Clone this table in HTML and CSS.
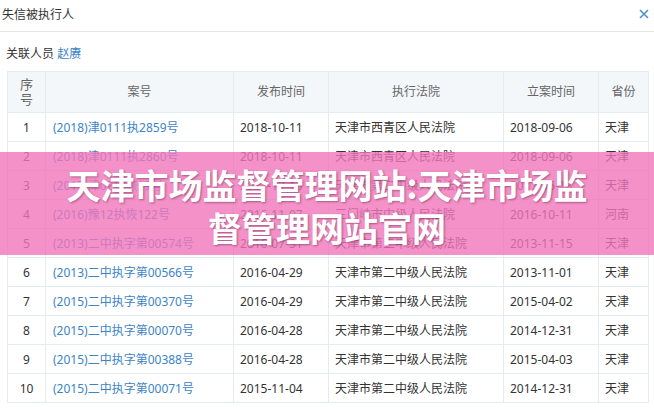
FILE: index.html
```html
<!DOCTYPE html>
<html lang="zh-CN">
<head>
<meta charset="utf-8">
<title>失信被执行人</title>
<link rel="stylesheet" href="styles.css">
</head>
<body>
<div class="dialog">
  <div class="dialog-head">
    <span class="dialog-title">失信被执行人</span>
    <span class="close" aria-label="关闭">
      <svg width="10" height="10" viewBox="0 0 10 10"><path d="M1 1L9 9M9 1L1 9" stroke="#4d90d0" stroke-width="1.6" fill="none"/></svg>
    </span>
  </div>
  <div class="related">关联人员 <a class="link">赵赓</a></div>
  <table class="grid">
    <colgroup>
      <col class="c-seq"><col class="c-case"><col class="c-date"><col class="c-court"><col class="c-date2"><col class="c-prov">
    </colgroup>
    <thead>
      <tr><th class="seq">序号</th><th>案号</th><th>发布时间</th><th>执行法院</th><th>立案时间</th><th>省份</th></tr>
    </thead>
    <tbody>
      <tr><td class="seq">1</td><td><a class="link">(2018)津0111执2859号</a></td><td>2018-10-11</td><td>天津市西青区人民法院</td><td>2018-09-06</td><td>天津</td></tr>
      <tr><td class="seq">2</td><td><a class="link">(2018)津0111执2860号</a></td><td>2018-10-11</td><td>天津市西青区人民法院</td><td>2018-09-06</td><td>天津</td></tr>
      <tr><td class="seq">3</td><td><a class="link">(2017)津02执恢19号</a></td><td>2017-12-13</td><td>天津市第二中级人民法院</td><td>2017-06-13</td><td>天津</td></tr>
      <tr><td class="seq">4</td><td><a class="link">(2016)豫12执恢122号</a></td><td>2016-11-07</td><td>三门峡市中级人民法院</td><td>2016-10-11</td><td>河南</td></tr>
      <tr><td class="seq">5</td><td><a class="link">(2013)二中执字第00574号</a></td><td>2016-07-31</td><td>天津市第二中级人民法院</td><td>2013-11-15</td><td>天津</td></tr>
      <tr><td class="seq">6</td><td><a class="link">(2013)二中执字第00566号</a></td><td>2016-04-29</td><td>天津市第二中级人民法院</td><td>2013-11-01</td><td>天津</td></tr>
      <tr><td class="seq">7</td><td><a class="link">(2015)二中执字第00370号</a></td><td>2016-04-29</td><td>天津市第二中级人民法院</td><td>2015-04-02</td><td>天津</td></tr>
      <tr><td class="seq">8</td><td><a class="link">(2015)二中执字第00070号</a></td><td>2016-04-28</td><td>天津市第二中级人民法院</td><td>2014-12-31</td><td>天津</td></tr>
      <tr><td class="seq">9</td><td><a class="link">(2015)二中执字第00388号</a></td><td>2016-04-28</td><td>天津市第二中级人民法院</td><td>2015-04-03</td><td>天津</td></tr>
      <tr><td class="seq">10</td><td><a class="link">(2015)二中执字第00071号</a></td><td>2015-11-04</td><td>天津市第二中级人民法院</td><td>2014-12-31</td><td>天津</td></tr>
    </tbody>
  </table>
</div>
<div class="banner">
  <div class="banner-text">天津市场监督管理网站:天津市场监督管理网站官网</div>
</div>
</body>
</html>
```
FILE: styles.css
```css
html, body {
  margin: 0;
  padding: 0;
  background: #ffffff;
}
body {
  width: 654px;
  height: 410px;
  overflow: hidden;
  position: relative;
  font-family: "Noto Sans", "Noto Sans CJK SC", sans-serif;
  font-size: 12px;
  color: #333333;
}
.dialog-head {
  height: 32px;
  border-bottom: 1px solid #e4e4e4;
  display: flex;
  align-items: center;
  justify-content: space-between;
  padding: 0 5px 4px 2px;
  box-sizing: border-box;
}
.dialog-title {
  color: #333333;
  font-size: 12px;
}
.close {
  display: flex;
  width: 10px;
  height: 10px;
}
.related {
  margin: 12px 0 0 6px;
  height: 20px;
  line-height: 20px;
  color: #333333;
}
.link {
  color: #3d84c6;
  text-decoration: none;
}
.grid {
  margin: 7px 0 0 7px;
  width: 641px;
  table-layout: fixed;
  border-collapse: collapse;
}
.c-seq { width: 38px; }
.c-case { width: 188px; }
.c-date { width: 95px; }
.c-court { width: 175px; }
.c-date2 { width: 95px; }
.c-prov { width: 50px; }
.grid th, .grid td {
  border: 1px solid #e6ebf0;
  padding: 0 6px;
  white-space: nowrap;
}
.grid th {
  background: #f3f7fa;
  color: #666666;
  font-weight: normal;
  height: 40px;
  text-align: center;
  line-height: 16px;
}
.grid th.seq {
  white-space: normal;
  padding: 0 9px;
  font-size: 13px;
  line-height: 15px;
}
.grid td {
  height: 28px;
  text-align: left;
}
.grid td.seq {
  text-align: center;
}
.grid td:nth-child(2) {
  padding-left: 7px;
}
.banner {
  position: absolute;
  left: 0;
  right: 0;
  top: 152px;
  height: 103px;
  background: rgba(240, 118, 186, 0.8);
  display: flex;
  align-items: center;
  justify-content: center;
}
.banner-text {
  width: 545px;
  text-align: center;
  color: #ffffff;
  font-family: "Noto Sans CJK SC", sans-serif;
  font-weight: 700;
  font-size: 34px;
  line-height: 43px;
  margin-top: 4px;
  text-shadow: 1px 1px 2px rgba(80, 20, 50, 0.45);
}
```
